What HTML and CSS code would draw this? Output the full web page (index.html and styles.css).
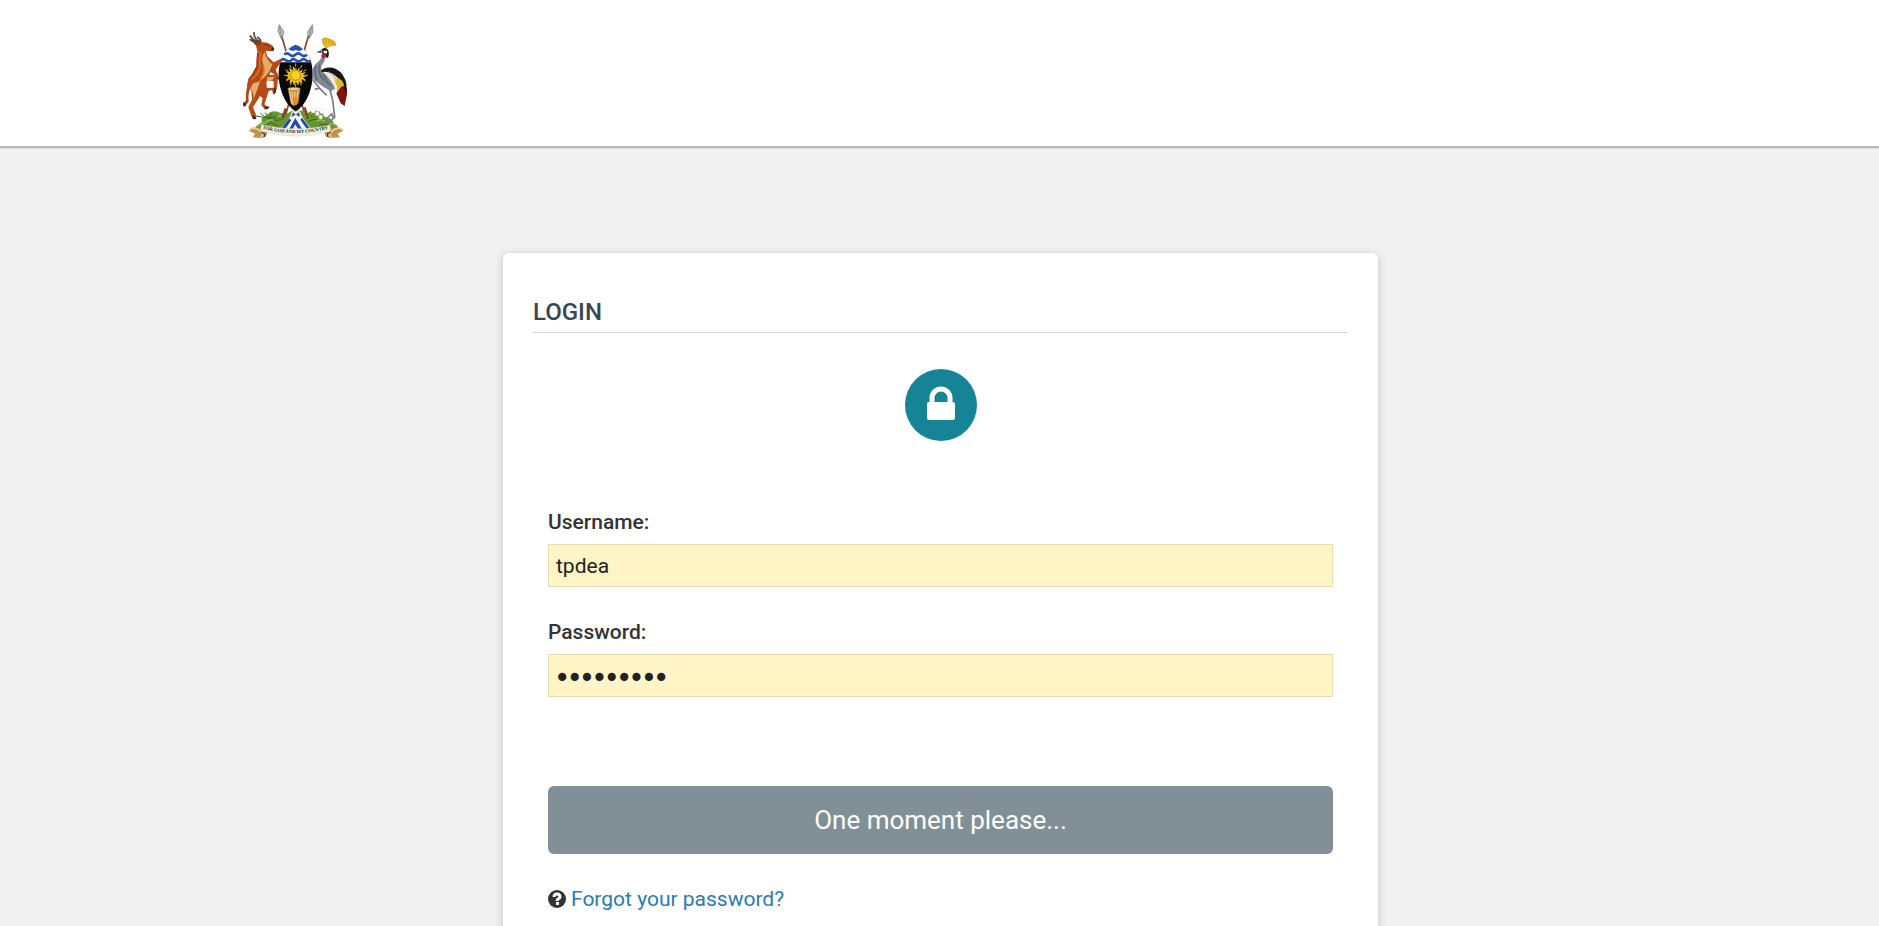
FILE: index.html
```html
<!DOCTYPE html>
<html lang="en">

<head>
    <meta charset="UTF-8">
    <meta name="viewport" content="width=device-width, initial-scale=1.0">
    <title>Login</title>
    <link rel="stylesheet" href="styles.css">
</head>

<body>

    <!-- Header -->
    <header class="header">
        <div class="container">
            <a class="brand" href="#" aria-label="Home">
                <svg class="coat-of-arms" viewBox="36 42 318 345" aria-hidden="true">
                    <!-- Spears -->
                    <g stroke="#8a4320" stroke-width="5" fill="none">
                        <path d="M154 76L229 328M236 76L163 328" />
                    </g>
                    <path d="M148 44l-4 20 10 22 8-20z M247 44l-14 22 4 20 12-20z" fill="#b9bec2" stroke="#666c70" stroke-width="2" />
                    <path d="M149 50l5 32M245 50l-8 32" stroke="#737a7e" stroke-width="2" />

                    <!-- Mound -->
                    <path d="M72 357Q82 342 96 336Q91 321 107 317L121 306Q138 300 151 309Q174 314 184 302H213Q226 300 231 311Q248 295 267 302Q280 310 284 321Q303 320 313 342Q324 345 325 357L287 365Q197 384 106 363Z" fill="#66942f" />
                    <g fill="none" stroke="#a2bd55" stroke-width="4" stroke-linecap="round">
                        <path d="M82 349q15-14 31-7M109 335q11-9 24-3M136 321q9-7 21-1M227 320q10-9 22-2M262 333q11-7 22 1M293 345q11-8 20 0" />
                    </g>
                    <g fill="none" stroke="#356b22" stroke-width="3" stroke-linecap="round">
                        <path d="M78 318l35 6 29-7M92 310l15 12M106 309l9 14M126 311l-9 12M139 324l-23 2M103 345l21-7 20 10M133 332l23-3M238 332l22-5M267 345l28-2M233 313l17 6" />
                    </g>
                    <g fill="#fff" stroke="#c9d1bd" stroke-width="1">
                        <circle cx="250" cy="302" r="7" />
                        <circle cx="264" cy="298" r="7" />
                        <circle cx="276" cy="304" r="7" />
                        <circle cx="262" cy="311" r="6" />
                        <circle cx="272" cy="321" r="6" />
                    </g>
                    <path d="M154 322l10-28 8 3-10 29zM221 294l9 34 7-4-10-34z" fill="#8a4320" />

                    <!-- River -->
                    <path d="M186 304H210Q215 324 242 353L225 366H168L153 354Q181 328 186 304Z" fill="#f4f7fb" />
                    <path d="M189 306l8 9 10-9 3 14-13-6-13 7zM196 324l22 36-9 5-13-22-12 22-8-5zM178 325l6 6-20 28-8-6zM216 323l-5 6 20 29 8-5z" fill="#264aa0" />

                    <!-- Shield -->
                    <path d="M197 104C232 116 248 151 248 192C248 243 225 288 197 304C169 288 146 243 146 192C146 151 162 116 197 104Z" fill="#080808" />
                    <path d="M197 104C221 113 238 131 243 157H151C156 131 173 113 197 104Z" fill="#fff" />
                    <path d="M176 117Q188 108 197 104Q207 108 219 118Q208 127 197 119Q187 127 176 117Z" fill="#2752aa" />
                    <g fill="none" stroke="#2752aa" stroke-width="8">
                        <path d="M163 134q8-8 16 0t17 0t17 0t18 0M153 151q7-7 15 0t15 0t15 0t15 0t15 0t14 0" />
                    </g>

                    <!-- Sun -->
                    <path d="M197 170l4 12 7-10 0 13 10-8-4 12 14-3-9 9 12 3-12 4 9 9-14-3 4 14-11-9-2 14-7-11-6 11-4-13-10 7 3-13-14 2 9-9-11-4 11-4-9-9 14 2-4-13 11 8 2-13 7 11z" fill="#f3c51c" />
                    <path d="M197 160v10M179 165l5 10M216 165l-5 10M167 179l9 5M229 179l-9 5M162 196h10M223 196h10M168 213l9-5M227 213l-9-5M181 226l4-10M214 226l-5-10M197 222v9" stroke="#d9ac17" stroke-width="3" />
                    <circle cx="197" cy="196" r="15" fill="#f7cf27" stroke="#8c6e08" stroke-width="2" />

                    <!-- Drum -->
                    <path d="M174 237Q192 230 211 237L205 280Q193 291 182 280Z" fill="#d78b31" />
                    <path d="M178 242l9 42M186 244l4 42M195 244l-2 42M204 242l-6 42" stroke="#f0dcb9" stroke-width="3" />
                    <path d="M187 262h17l-4 22-10 3z" fill="#e29122" />
                    <ellipse cx="192" cy="237" rx="19" ry="5" fill="#e5d1a6" stroke="#9c7135" stroke-width="2" />

                    <!-- Antelope -->
                    <path d="M57 214Q45 247 48 270L39 284L45 289L56 275Q53 249 64 226" fill="#a84718" />
                    <path d="M67 92L82 88L96 96L112 98L128 107L132 119L123 124L107 122L112 139L131 157L153 146L157 151L137 179L147 200L142 211L133 194L122 186L115 200L109 218L111 234L133 233L137 244L130 255L126 240L109 245L95 240L88 262L69 291L80 320L72 326L64 318L55 292L66 269L64 244L51 229Q51 209 65 194L80 167L83 126L77 104Z" fill="#b94a18" />
                    <path d="M108 194L133 195L144 207L140 239L131 242L131 213L110 211Z" fill="#b94a18" />
                    <path d="M91 237L117 240L110 263L103 282L109 289L120 291L105 298L94 286L98 263L78 252Z" fill="#b94a18" />
                    <path d="M104 125Q109 150 127 163L120 180Q108 202 90 211Q105 180 99 161Q92 142 104 125ZM70 219Q80 221 91 211Q83 238 70 269Q73 246 60 237ZM112 201l21 0-6 9-17 1z" fill="#e5ae68" />
                    <path d="M92 125Q88 151 91 171Q83 196 65 207M98 163Q107 185 93 204" fill="none" stroke="#d86e27" stroke-width="5" />
                    <path d="M83 128Q79 155 81 169Q70 194 55 209M111 105l10 5" fill="none" stroke="#852e10" stroke-width="3" />
                    <path d="M82 99Q71 98 61 89M87 98Q69 93 61 78M88 96Q71 85 72 68M91 96Q94 88 83 82" fill="none" stroke="#4e4430" stroke-width="5" stroke-linecap="round" />
                    <path d="M65 84l5-3M71 78l6-2M77 90l5-4" stroke="#a59a78" stroke-width="2" />
                    <path d="M92 98l-24-4 7 10 16 5z" fill="#9a3715" />
                    <circle cx="108" cy="104" r="2" fill="#151515" />
                    <path d="M127 110l6 5-3 8-7-1zM132 235h6v12l-6 6zM65 317l9 1 6 9-11 1zM39 278l5-1 5 9-8 5zM104 289l14 1-5 8-9 0zM142 203l6-2-2 9z" fill="#41281c" />

                    <!-- Crane -->
                    <path d="M287 117Q276 103 275 88Q281 80 293 84Q313 89 319 102Q320 107 315 107Q298 107 287 117Z" fill="#dcaa19" />
                    <path d="M282 89l7 23M293 87l-2 25M304 92l-11 19M312 101l-18 11" stroke="#f4ce45" stroke-width="2" />
                    <path d="M281 133Q292 145 276 165Q269 174 279 182L304 199L322 232L303 244L280 231L253 211Q240 184 255 164Q270 153 281 133Z" fill="#7f8994" />
                    <path d="M274 119Q282 110 292 117Q301 129 293 144L281 139L277 129Z" fill="#171717" />
                    <path d="M281 122h11l-2 9-9-2z" fill="#fff" />
                    <path d="M275 132l10-2 4 10-7 5-8-3z" fill="#d6172b" />
                    <path d="M258 127l15-6 3 8z" fill="#32494d" />
                    <circle cx="279" cy="123" r="2" fill="#4e9cb6" />
                    <path d="M257 166Q251 190 262 210M268 164Q263 190 281 211M282 187Q284 214 304 229" fill="none" stroke="#59636f" stroke-width="4" />
                    <path d="M272 183Q291 166 318 177Q345 191 350 226L336 228L306 211Q288 197 272 183Z" fill="#151515" />
                    <path d="M277 186Q303 182 325 205L331 236L318 243Q309 213 277 186Z" fill="#f0ead8" />
                    <path d="M294 185q19 10 26 36M307 190q16 16 18 38" fill="none" stroke="#a7a08a" stroke-width="2" />
                    <path d="M323 203Q346 214 341 233L321 258Q325 230 316 216Z" fill="#dfb625" />
                    <path d="M334 230Q353 221 351 253L344 288L332 280L319 250Z" fill="#7e1515" />
                    <path d="M346 216q7 18 3 36l-8-23z" fill="#1b1414" />
                    <path d="M247 207l22 28 21 21M299 238l9 33 6 48-16 21M308 309l-22 20M304 314l11 11M270 234l-16 4" fill="none" stroke="#777d84" stroke-width="5" stroke-linejoin="round" />

                    <!-- Motto ribbon -->
                    <path d="M64 357L91 354L113 363L109 379L98 384L69 382L75 371L56 362Z" fill="#c2914a" />
                    <path d="M334 356L307 354L282 363L287 379L298 384L330 382L323 371L340 362Z" fill="#c2914a" />
                    <path d="M60 358q13-8 28 3l10 12-5 8M337 358q-13-8-28 3l-10 12 5 8" fill="none" stroke="#ead29d" stroke-width="5" />
                    <path d="M92 368l12 3-1 10M303 368l-11 3 1 10" fill="none" stroke="#29385f" stroke-width="3" />
                    <path d="M94 344Q197 368 300 345L302 363Q197 395 92 362Z" fill="#f4f0df" stroke="#c8c2a8" stroke-width="1" />
                    <path id="motto" d="M72 349Q197 389 322 349" fill="none" />
                    <text class="motto">
                        <textPath href="#motto" startOffset="50%" text-anchor="middle">FOR GOD AND MY COUNTRY</textPath>
                    </text>
                </svg>
            </a>
        </div>
    </header>

    <!-- Login form -->
    <main class="container">
        <div class="login-card">
            <h1>LOGIN</h1>

            <div class="lock-badge">
                <svg viewBox="0 0 72 72" aria-hidden="true">
                    <circle cx="36" cy="36" r="36" fill="#148496" />
                    <path d="M27 34v-5a9 9 0 0 1 18 0v5" fill="none" stroke="#fff" stroke-width="5" />
                    <rect x="22" y="33" width="28" height="18" rx="2" fill="#fff" />
                </svg>
            </div>

            <form id="loginform" class="login-form">
                <div class="form-group">
                    <label for="username">Username:</label>
                    <input type="text" id="username" name="username" value="tpdea" />
                </div>

                <div class="form-group">
                    <label for="password">Password:</label>
                    <input type="password" id="password" name="password" value="123456789" />
                </div>

                <button type="submit">One moment please...</button>

                <div class="forgot">
                    <svg viewBox="0 0 18 18" aria-hidden="true">
                        <circle cx="9" cy="9" r="9" fill="#333" />
                        <path d="M6 7C6 3 12 3 12 7C12 9 9 8 9 11" fill="none" stroke="#fff" stroke-width="3" />
                        <path d="M8 12h3v3H8z" fill="#fff" />
                    </svg>
                    <a href="#">Forgot your password?</a>
                </div>
            </form>
        </div>
    </main>

</body>

</html>
```

FILE: styles.css
```css
/* Basic Reset */
* {
    margin: 0;
    padding: 0;
    box-sizing: border-box;
}

body {
    background-color: #f1f1f1;
    font-family: Roboto, Arial, sans-serif;
    font-size: 21px;
    line-height: 28px;
    color: #333;
}

.container {
    width: 100%;
    max-width: 1425px;
    margin: 0 auto;
    padding: 0 13px 0 15px;
}

/* Header */
.header {
    background-color: #fff;
    padding: 24px 0 7px;
    border-bottom: 2px solid #bbb;
    box-shadow: 0 0 0 1px #dcdcdc;
}

.brand {
    display: inline-block;
    vertical-align: top;
}

.coat-of-arms {
    display: block;
    width: 106px;
    height: 115px;
    overflow: visible;
}

.motto {
    font-family: "Liberation Serif", serif;
    font-size: 14px;
    font-weight: bold;
    fill: #222;
}

/* Login Card */
.login-card {
    max-width: 875px;
    margin: 105px auto 0;
    padding: 43px 30px 30px;
    background-color: #fff;
    border-radius: 6px;
    box-shadow: 0 2px 8px rgba(0, 0, 0, 0.2);
}

h1 {
    padding-bottom: 4px;
    border-bottom: 1px solid #cfd8dc;
    font-size: 24px;
    font-weight: 500;
    line-height: 32px;
    color: #37474f;
}

.lock-badge {
    display: flex;
    justify-content: center;
    margin-top: 36px;
}

.lock-badge svg {
    width: 72px;
    height: 72px;
}

/* Form */
.login-form {
    padding: 0 15px;
    margin-top: 67px;
}

.form-group {
    margin-bottom: 31px;
}

label {
    display: block;
    margin-bottom: 8px;
    font-weight: 500;
}

input {
    display: block;
    width: 100%;
    height: 43px;
    padding: 0 7px;
    border: 1px solid #ebdcae;
    background-color: #fff5c6;
    font: inherit;
    color: #222;
}

/* Larger password dots */
input[type="password"] {
    padding-top: 4px;
    font-family: "DejaVu Sans", sans-serif;
    -webkit-text-stroke: 2px #222;
}

button {
    display: block;
    width: 100%;
    height: 68px;
    margin-top: 89px;
    border: none;
    border-radius: 6px;
    background-color: #819096;
    font-family: inherit;
    font-size: 26px;
    color: #fff;
    cursor: pointer;
}

.forgot {
    display: flex;
    align-items: center;
    gap: 5px;
    margin-top: 31px;
}

.forgot svg {
    width: 18px;
    height: 18px;
}

.forgot a {
    color: #277bb8;
    text-decoration: none;
}

.forgot a:hover {
    text-decoration: underline;
}
```
